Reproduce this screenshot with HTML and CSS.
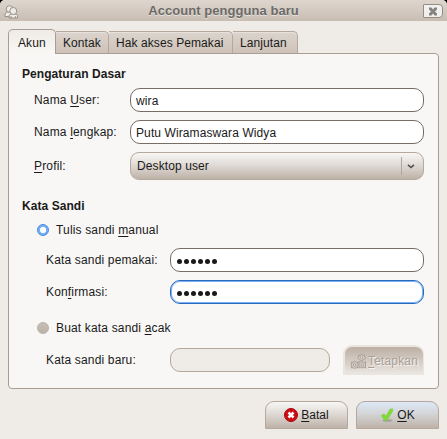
FILE: index.html
```html
<!DOCTYPE html>
<html lang="id">
<head>
<meta charset="utf-8">
<title>Account pengguna baru</title>
<link rel="stylesheet" href="styles.css">
</head>
<body>
<div class="window">
  <header class="titlebar">
    <svg class="users" width="15" height="14" viewBox="0 0 15 14"><g fill="#eeebe8" stroke="#99928b" stroke-width="1"><path d="M1 11.500V9L2.500 7h4L9 9v2.500z"/><circle cx="5.500" cy="4" r="3.300"/><path d="M5 13V10.500L7 9h5l1.500 1.500V13h-2v-1.500V13H7v-1.500V13z"/><circle cx="9.300" cy="6" r="3.500"/></g></svg>
    <h1>Account pengguna baru</h1>
    <button class="close" aria-label="Tutup"><svg width="10" height="9" viewBox="0 0 10 9"><path d="M1 .5h2.500L5 2.500 6.500.5H9v2L7 4.500l2 2v2H6.500L5 6.500 3.500 8.500H1v-2l2-2-2-2z" fill="#858380"/></svg></button>
  </header>
  <nav class="tabs">
    <div class="tab active">Akun</div>
    <div class="tab kontak">Kontak</div>
    <div class="tab akses">Hak akses Pemakai</div>
    <div class="tab lanjutan">Lanjutan</div>
  </nav>
  <main class="panel">
    <h2>Pengaturan Dasar</h2>
    <div class="basic">
      <label>Nama <u>U</u>ser:</label><div class="field">wira</div>
      <label>Nama <u>l</u>engkap:</label><div class="field">Putu Wiramaswara Widya</div>
      <label><u>P</u>rofil:</label>
      <div class="combo"><span>Desktop user</span><i></i><svg width="8" height="5" viewBox="0 0 8 5"><path d="M1 .8l3 2.700L7 .8" fill="none" stroke="#55504c" stroke-width="1.600"/></svg></div>
    </div>
    <h2>Kata Sandi</h2>
    <div class="choice manual"><b class="radio on"></b><span>Tulis sandi <u>m</u>anual</span></div>
    <div class="passwords">
      <label>Kata sandi pemakai:</label><div class="field dots"><i></i><i></i><i></i><i></i><i></i><i></i></div>
      <label>Kon<u>f</u>irmasi:</label><div class="field dots focus"><i></i><i></i><i></i><i></i><i></i><i></i></div>
    </div>
    <div class="choice random"><b class="radio"></b><span>Buat kata sandi <u>a</u>cak</span></div>
    <div class="generate">
      <label>Kata sandi baru:</label><div class="field disabled"></div>
      <button class="set"><svg width="17" height="16" viewBox="0 0 17 16"><g fill="#d4ccc4" stroke="#a99f96" stroke-width="1"><path d="M11.500 .8l1.300 1.500 2-.3-.3 2 1.300 1-1.800 1.500-2.500 1.300L9 6.500 7.500 5l1.300-1-.3-2 2 .3zM4.500 7.800l1.300 1.500 2-.3-.3 2L8.500 12l-1.300 1 .3 2-2-.3-1 1-1-1-2 .3.3-2L.8 12l1-1-.3-2 2 .3z"/><path d="M9 8.500l1.500 1 1.500-1 1.500 1 2-1v6.500l-2-.8-1.500.8-1.500-.8-1.500.8z"/><circle cx="11.500" cy="4.500" r="1.200" fill="#eee9e5"/><circle cx="4.500" cy="12" r="1.200" fill="#eee9e5"/><circle cx="12.300" cy="12" r="1.200" fill="#eee9e5"/></g></svg><span><u>T</u>etapkan</span></button>
    </div>
  </main>
  <footer class="actions">
    <button><svg width="14" height="14" viewBox="0 0 14 14"><circle cx="7" cy="7" r="6.500" fill="#d00b12" stroke="#a5080d"/><path d="M4.500 4.500l5 5m0-5l-5 5" stroke="#fff" stroke-width="2.500"/></svg><span><u>B</u>atal</span></button>
    <button class="ok"><svg width="14" height="16" viewBox="0 0 14 16"><ellipse cx="7.500" cy="13.500" rx="5" ry="1.300" fill="#938b82" opacity=".6"/><path d="M1.500 8.500L4 7l2 2.500L10 2.300l2.500-.5.300 2L7 13.200H4.700z" fill="#80dc31" stroke="#79cf3b" stroke-width=".8"/></svg><span><u>O</u>K</span></button>
  </footer>
</div>
</body>
</html>
```
FILE: styles.css
```css
* { box-sizing: border-box; }
body { margin: 0; background: #000; font: 12px/14px "Liberation Sans", Arial, sans-serif; color: #1a1a1a; letter-spacing: .16px; }
.window { width: 447px; height: 439px; background: #efebe6; border-radius: 5px 5px 0 0; overflow: hidden; }
u { text-decoration: underline; text-decoration-thickness: 1px; text-underline-offset: 2px; text-decoration-skip-ink: none; }
h1, h2 { margin: 0; font-weight: bold; }
button { font: inherit; letter-spacing: inherit; color: inherit; margin: 0; padding: 0; }
svg { flex: none; display: block; }

.titlebar { display: flex; align-items: flex-start; justify-content: space-between; height: 21px; padding: 4px 4px 0; background: linear-gradient(#ded6ce, #c8bdb3); }
.titlebar h1 { font-size: 13px; line-height: 14px; color: #6c6a68; text-shadow: 0 1px #e8e3de; letter-spacing: .05px; margin-left: 5px; }
.users { margin-top: 1px; }
.close { display: flex; align-items: center; justify-content: center; width: 20px; height: 14px; border: 1px solid #958d84; border-radius: 1px 4px 4px 1px; background: #f1f0ee; }

.tabs { display: flex; align-items: flex-end; height: 32px; padding-left: 8px; }
.tab { height: 22px; padding: 4px 0 0 7px; border: 1px solid #b5a99d; border-width: 1px 1px 0 0; border-radius: 0 5px 0 0; background: linear-gradient(#dcd4cd, #cdc2b8); box-shadow: inset 0 1px #e7e1dc; letter-spacing: .08px; white-space: nowrap; }
.tab.active { position: relative; z-index: 1; width: 48px; height: 25px; margin-bottom: -1px; padding: 6px 0 0 9px; border-left-width: 1px; border-color: #a99d92; border-radius: 5px 5px 0 0; background: linear-gradient(#efebe6, #f8f7f5); box-shadow: none; }
.kontak { width: 53px; }
.akses { width: 124px; }
.lanjutan { width: 65px; }

.panel { width: 431px; height: 336px; margin-left: 8px; padding: 13px 14px 0 13px; background: #f8f7f5; border: 1px solid #a99d92; border-radius: 0 4px 4px 4px; }
.panel h2 { font-size: 12px; line-height: 14px; letter-spacing: .06px; }
.basic { display: grid; grid-template-columns: 96px 294px; grid-template-rows: 24px 24px 28px; row-gap: 8px; align-items: center; margin: 7px 0 19px 12px; }
.field { height: 24px; display: flex; align-items: center; padding: 2px 5px 0; background: #fff; border: 1px solid #786d64; border-radius: 10px; letter-spacing: .1px; }
.combo { height: 28px; display: flex; align-items: center; padding: 0 8px 0 6px; border: 1px solid #b5a89c; border-radius: 9px; background: linear-gradient(#f8f7f5, #e0dbd6 45%, #beb2a8); letter-spacing: .1px; }
.combo span { flex: 1; }
.combo i { width: 1px; height: 18px; margin-right: 5px; background: #b0a69d; }
.choice { display: flex; align-items: center; height: 14px; margin-left: 15px; }
.choice span { margin-left: 7px; }
.radio { width: 12px; height: 12px; border-radius: 50%; border: 1px solid #b9b1aa; background: linear-gradient(#c9beb5, #bdb1a7); }
.radio.on { border-color: #4d8bd5; background: radial-gradient(circle, #fff 0 2.8px, #73b0f7 3.5px); }
.manual { margin-top: 10px; }
.passwords { display: grid; grid-template-columns: 124px 254px; row-gap: 8px; align-items: center; margin: 11px 0 17px 24px; }
.dots { gap: 1.5px; padding-top: 3px; padding-left: 5.5px; }
.dots i { width: 5.5px; height: 5.5px; border-radius: 50%; background: #1a1a1a; }
.focus { border-color: #2869bd; box-shadow: inset 0 0 0 1px #78b2f6; }
.generate { display: grid; grid-template-columns: 124px 173px 81px; align-items: center; margin: 10px 0 0 24px; }
.disabled { width: 160px; background: #efebe6; border-color: #b5a89c; }
.set { display: flex; align-items: center; justify-content: center; gap: 1px; width: 81px; height: 30px; border: 1px solid #eae5df; border-width: 2px 1px 1px 2px; border-radius: 9px 9px 0 0; background: linear-gradient(#bcafa4, #ebe6e1); color: #aaa098; text-shadow: 1px 1px #f7f4f1; }
.actions { display: flex; justify-content: flex-end; gap: 8px; margin: 12px 8px 0 0; }
.actions button { display: flex; align-items: center; justify-content: center; gap: 3px; width: 83px; height: 28px; border: 1px solid #b5a89c; border-radius: 9px 9px 0 0; background: linear-gradient(#f8f7f5, #dfdad5 45%, #beb2a8); letter-spacing: .05px; }
.actions .ok { background: linear-gradient(#dce8f7, #d4d5d7 45%, #beb2a8); }
```
